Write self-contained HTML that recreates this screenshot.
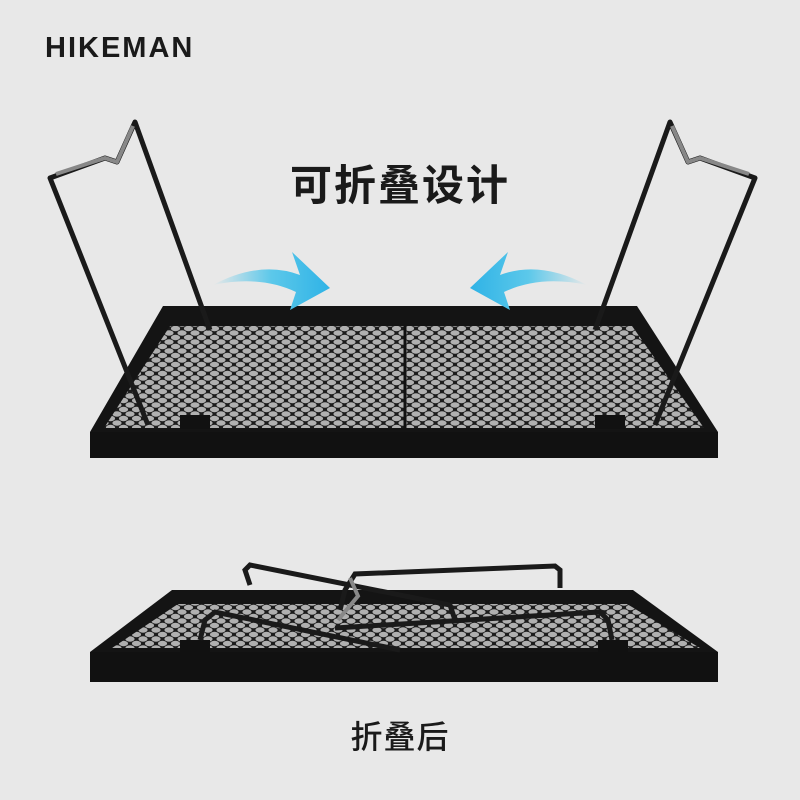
<!DOCTYPE html>
<html><head><meta charset="utf-8"><style>
html,body{margin:0;padding:0}
body{width:800px;height:800px;background:#e8e8e8;position:relative;overflow:hidden;font-family:"Liberation Sans","Noto Sans CJK SC",sans-serif}
.logo{position:absolute;left:45px;top:32px;font-size:29px;font-weight:bold;letter-spacing:2px;color:#1a1a1a}
.t1{position:absolute;left:0;width:800px;text-align:center;top:152px;font-size:42px;font-weight:bold;color:#1a1a1a;letter-spacing:2px}
.t2{position:absolute;left:0;width:800px;text-align:center;top:712px;font-size:32px;font-weight:500;color:#1a1a1a;letter-spacing:1px}
svg{position:absolute;left:0;top:0}
</style></head><body>
<svg width="800" height="800" viewBox="0 0 800 800">
<defs>
<pattern id="mesh" width="13" height="9" patternUnits="userSpaceOnUse">
<rect width="13" height="9" fill="#1c1c1c"/>
<ellipse cx="6.5" cy="4.5" rx="4.6" ry="2.7" fill="#b0b0b0"/>
<ellipse cx="0" cy="0" rx="4.6" ry="2.7" fill="#b0b0b0"/>
<ellipse cx="13" cy="0" rx="4.6" ry="2.7" fill="#b0b0b0"/>
<ellipse cx="0" cy="9" rx="4.6" ry="2.7" fill="#b0b0b0"/>
<ellipse cx="13" cy="9" rx="4.6" ry="2.7" fill="#b0b0b0"/>
</pattern>
<linearGradient id="ar" x1="0" x2="1"><stop offset="0" stop-color="#5cc8ea" stop-opacity="0"/><stop offset="0.5" stop-color="#5cc8ea"/><stop offset="1" stop-color="#2fb3e6"/></linearGradient>
<linearGradient id="al" x1="1" x2="0"><stop offset="0" stop-color="#5cc8ea" stop-opacity="0"/><stop offset="0.5" stop-color="#5cc8ea"/><stop offset="1" stop-color="#2fb3e6"/></linearGradient>
</defs>
<!-- top tray -->
<polygon points="163,306 637,306 718,432 90,432" fill="#141414"/>
<polygon points="170,326 632,326 704,428 104,428" fill="url(#mesh)"/>
<line x1="405" y1="326" x2="405" y2="428" stroke="#111" stroke-width="3"/>
<rect x="90" y="432" width="628" height="26" fill="#111"/>
<rect x="180" y="415" width="30" height="14" fill="#111"/>
<rect x="595" y="415" width="30" height="14" fill="#111"/>
<!-- legs top -->
<path d="M148,425 L50,178 L105,158 L117,162 L135,122 L210,330" fill="none" stroke="#1a1a1a" stroke-width="5" stroke-linejoin="round"/>
<path d="M56,174 L105,158 L117,162 L133,126" fill="none" stroke="#888" stroke-width="4" stroke-linejoin="round"/>
<path d="M655,425 L755,178 L700,158 L688,162 L670,122 L595,330" fill="none" stroke="#1a1a1a" stroke-width="5" stroke-linejoin="round"/>
<path d="M749,174 L700,158 L688,162 L672,126" fill="none" stroke="#888" stroke-width="4" stroke-linejoin="round"/>
<!-- arrows -->
<path d="M213,285 Q260,260 300,275 L292,252 L330,288 L290,310 L296,292 Q260,275 213,285 Z" fill="url(#ar)"/>
<path d="M587,285 Q540,260 500,275 L508,252 L470,288 L510,310 L504,292 Q540,275 587,285 Z" fill="url(#al)"/>
<!-- bottom tray -->
<polygon points="172,590 633,590 718,652 90,652" fill="#141414"/>
<polygon points="178,604 627,604 700,648 112,648" fill="url(#mesh)"/>
<rect x="90" y="652" width="628" height="30" fill="#111"/>
<rect x="180" y="640" width="30" height="12" fill="#111"/>
<rect x="598" y="640" width="30" height="12" fill="#111"/>
<path d="M250,585 L245,570 L250,565 L450,605 L455,620" fill="none" stroke="#1a1a1a" stroke-width="5"/>
<path d="M560,588 L560,570 L555,566 L355,574 L345,590 L340,610" fill="none" stroke="#1a1a1a" stroke-width="5"/>
<path d="M350,578 L358,596 L338,620" fill="none" stroke="#888" stroke-width="4"/>
<path d="M200,640 L205,620 L215,612 L400,650 M335,628 L600,612 L608,620 L612,640" fill="none" stroke="#1a1a1a" stroke-width="5"/>
</svg>
<div class="logo">HIKEMAN</div>
<div class="t1">可折叠设计</div>
<div class="t2">折叠后</div>
</body></html>
